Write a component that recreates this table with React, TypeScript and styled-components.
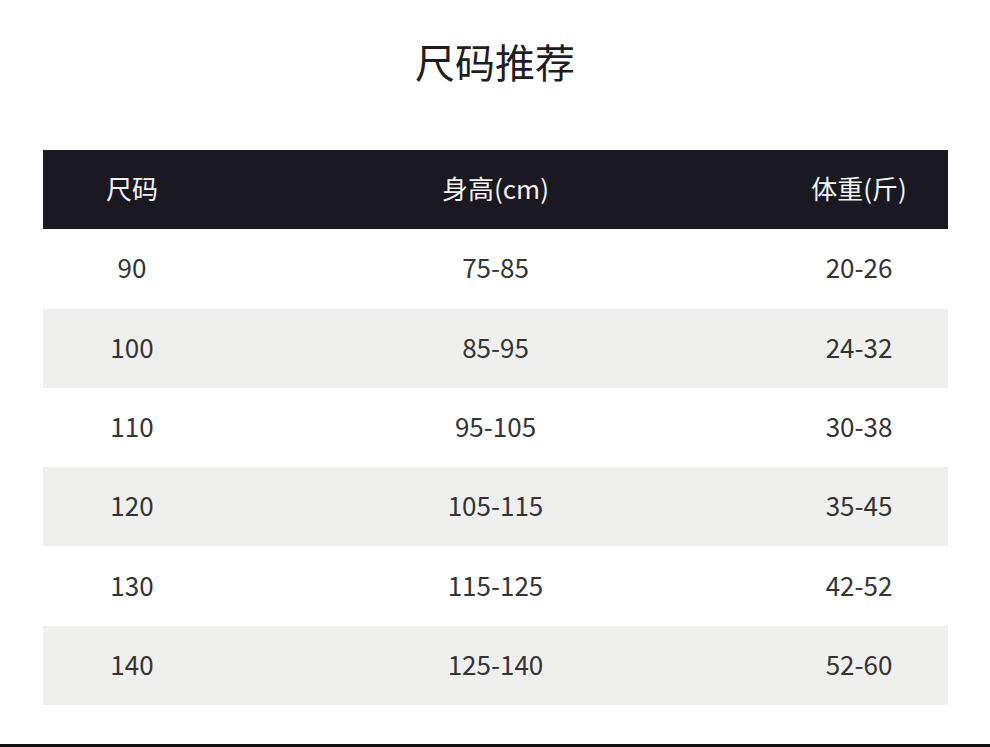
import styled, { createGlobalStyle } from 'styled-components';

const GlobalStyle = createGlobalStyle`
    html, body {
        margin: 0;
        padding: 0;
        background: #ffffff;
    }
`
const Page = styled.div`
    width: 990px;
    height: 747px;
    display: flex;
    flex-direction: column;
    background: #ffffff;
    font-family: "Noto Sans CJK SC", "Noto Sans", sans-serif;
    color: #2e2e2e;
    box-sizing: border-box;
`
const Title = styled.h1`
    margin: 0;
    height: 150px;
    padding-top: 36px;
    box-sizing: border-box;
    text-align: center;
    font-size: 40px;
    line-height: 50px;
    font-weight: 400;
    color: #1e1e1e;
`
const Table = styled.div`
    margin: 0 42px 0 43px;
    display: flex;
    flex-direction: column;
`
const Row = styled.div<{ $kind: 'head' | 'odd' | 'even' }>`
    display: grid;
    grid-template-columns: 178px 1fr 178px;
    align-items: center;
    height: 79.3px;
    padding-bottom: 4px;
    box-sizing: border-box;
    font-size: 26px;
    background: ${p => (p.$kind === 'head' ? '#1a1820' : p.$kind === 'even' ? '#efefed' : '#ffffff')};
    color: ${p => (p.$kind === 'head' ? '#f4f4f4' : '#333333')};
`
const Cell = styled.div`
    text-align: center;
    white-space: nowrap;
`
const Spacer = styled.div`
    flex: 1;
`
const BottomBar = styled.div`
    height: 3px;
    background: #111111;
`

const rows = [
    ['90', '75-85', '20-26'],
    ['100', '85-95', '24-32'],
    ['110', '95-105', '30-38'],
    ['120', '105-115', '35-45'],
    ['130', '115-125', '42-52'],
    ['140', '125-140', '52-60'],
]

export default function App() {
    return (
        <Page>
            <GlobalStyle />
            <Title>尺码推荐</Title>
            <Table>
                <Row $kind="head">
                    <Cell>尺码</Cell>
                    <Cell>身高(cm)</Cell>
                    <Cell>体重(斤)</Cell>
                </Row>
                {rows.map((r, i) => (
                    <Row key={r[0]} $kind={i % 2 === 0 ? 'odd' : 'even'}>
                        <Cell>{r[0]}</Cell>
                        <Cell>{r[1]}</Cell>
                        <Cell>{r[2]}</Cell>
                    </Row>
                ))}
            </Table>
            <Spacer />
            <BottomBar />
        </Page>
    );
}
